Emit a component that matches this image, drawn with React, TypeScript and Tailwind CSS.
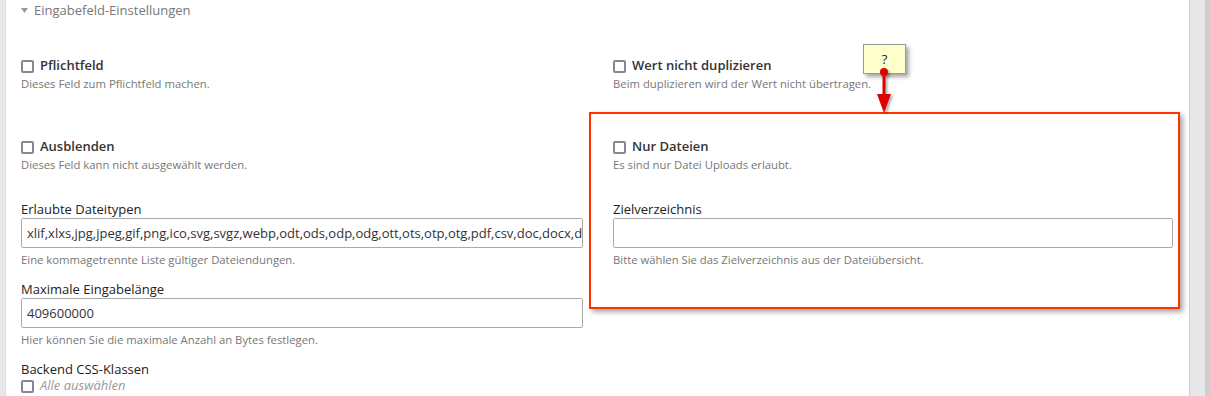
import React from "react";

const font = { fontFamily: '"Open Sans", "Noto Sans", sans-serif' };

function Box() {
  return <span className="inline-block w-[13px] h-[13px] border-2 border-[#8a8593] rounded-[2px] bg-white shrink-0" />;
}

function CheckField({ label, desc }: { label: string; desc: string }) {
  return (
    <div className="flex flex-col">
      <div className="flex items-center gap-[6px] h-[18px]">
        <Box />
        <span className="text-[13px] font-semibold text-[#333]">{label}</span>
      </div>
      <div className="text-[11.3px] text-[#777] leading-[16px] mt-[1px]">{desc}</div>
    </div>
  );
}

function InputField({ label, value, desc }: { label: string; value: string; desc: string }) {
  return (
    <div className="flex flex-col">
      <div className="text-[13px] font-medium text-[#222] leading-[18px] h-[18px]">{label}</div>
      <div className="h-[30px] border border-[#aaa] rounded-[2px] px-[5px] leading-[28px] overflow-hidden whitespace-nowrap text-[13px] text-[#333]">
        {value}
      </div>
      <div className="text-[11.3px] text-[#777] leading-[14px] mt-[5px]">{desc}</div>
    </div>
  );
}

export default function App() {
  return (
    <div className="w-[1210px] h-[396px] bg-[#e8e8eb] flex overflow-hidden" style={font}>
      <div className="w-[6px] bg-[#e8e8eb] border-r border-[#dcdcde] shrink-0" />
      <div className="flex-1 bg-white border-r border-[#cfcfd2] relative pl-[15px] pr-[16px]">
        <div className="flex items-center h-[22px] gap-[6px] text-[13px] text-[#777]">
          <svg width="7" height="6" viewBox="0 0 7 6"><path d="M0 0 L7 0 L3.5 5 Z" fill="#999" /></svg>
          <span>Eingabefeld-Einstellungen</span>
        </div>
        <div className="grid grid-cols-[562px_560px] gap-x-[30px] mt-[35px]">
          <div className="h-[81px]"><CheckField label="Pflichtfeld" desc="Dieses Feld zum Pflichtfeld machen." /></div>
          <div className="h-[81px]"><CheckField label="Wert nicht duplizieren" desc="Beim duplizieren wird der Wert nicht übertragen." /></div>
          <div className="h-[62px]"><CheckField label="Ausblenden" desc="Dieses Feld kann nicht ausgewählt werden." /></div>
          <div className="h-[62px]"><CheckField label="Nur Dateien" desc="Es sind nur Datei Uploads erlaubt." /></div>
          <div className="h-[80px]">
            <InputField
              label="Erlaubte Dateitypen"
              value="xlif,xlxs,jpg,jpeg,gif,png,ico,svg,svgz,webp,odt,ods,odp,odg,ott,ots,otp,otg,pdf,csv,doc,docx,dot,dotx,xls,xlsx,xlt,xltx"
              desc="Eine kommagetrennte Liste gültiger Dateiendungen."
            />
          </div>
          <div className="h-[80px]">
            <InputField label="Zielverzeichnis" value="" desc="Bitte wählen Sie das Zielverzeichnis aus der Dateiübersicht." />
          </div>
          <div className="h-[80px]">
            <InputField label="Maximale Eingabelänge" value="409600000" desc="Hier können Sie die maximale Anzahl an Bytes festlegen." />
          </div>
          <div className="h-[80px]" />
          <div>
            <div className="text-[13px] font-medium text-[#222] leading-[18px]">Backend CSS-Klassen</div>
            <div className="flex items-center gap-[6px] h-[16px]">
              <Box />
              <span className="text-[13px] italic text-[#999]">Alle auswählen</span>
            </div>
          </div>
        </div>

        {/* red highlight box */}
        <div className="absolute left-[583px] top-[112px] w-[591px] h-[197px] border-2 border-[#ff3300] shadow-[3px_3px_5px_rgba(0,0,0,0.35)] pointer-events-none" />

        {/* tooltip */}
        <div className="absolute left-[857px] top-[44px] w-[43px] h-[30px] bg-[#ffffcc] border border-[#999] shadow-[3px_3px_4px_rgba(0,0,0,0.35)] flex items-start justify-center pt-[5px] text-[13px] text-[#223]">
          ?
        </div>
        <svg className="absolute left-[867px] top-[67px] drop-shadow-[2px_2px_1px_rgba(0,0,0,0.3)]" width="22" height="46" viewBox="0 0 22 46">
          <circle cx="11" cy="5" r="4" fill="#e00000" />
          <rect x="9.5" y="5" width="3" height="24" fill="#e00000" />
          <path d="M4 27 L18 27 L11 46 Z" fill="#e00000" />
        </svg>
      </div>
      <div className="w-[15px] bg-[#e8e8eb] shrink-0" />
      <div className="w-[5px] bg-[#cfcfd3] shrink-0" />
    </div>
  );
}
